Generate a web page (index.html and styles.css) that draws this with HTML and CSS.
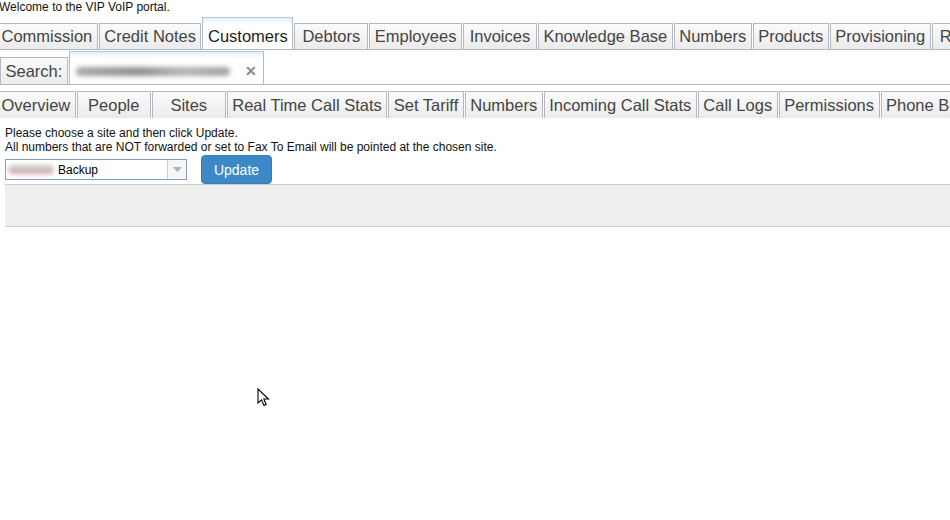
FILE: index.html
```html
<!DOCTYPE html>
<html>
<head>
<meta charset="utf-8">
<link rel="stylesheet" href="styles.css">
</head>
<body>
<div class="welcome">Welcome to the VIP VoIP portal.</div>
<div class="tabs main">
  <span class="tab">Commission</span>
  <span class="tab">Credit Notes</span>
  <span class="tab active">Customers</span>
  <span class="tab">Debtors</span>
  <span class="tab">Employees</span>
  <span class="tab">Invoices</span>
  <span class="tab">Knowledge Base</span>
  <span class="tab">Numbers</span>
  <span class="tab">Products</span>
  <span class="tab">Provisioning</span>
  <span class="tab">Reports</span>
</div>
<div class="tabs search">
  <span class="tab">Search:</span>
  <span class="tab active field"><span class="blur wide"></span><span class="close">✕</span></span>
</div>
<div class="tabs sub">
  <span class="tab">Overview</span>
  <span class="tab">People</span>
  <span class="tab">Sites</span>
  <span class="tab">Real Time Call Stats</span>
  <span class="tab">Set Tariff</span>
  <span class="tab">Numbers</span>
  <span class="tab">Incoming Call Stats</span>
  <span class="tab">Call Logs</span>
  <span class="tab">Permissions</span>
  <span class="tab">Phone Book</span>
</div>
<div class="content">
  <p class="msg">Please choose a site and then click Update.<br>All numbers that are NOT forwarded or set to Fax To Email will be pointed at the chosen site.</p>
  <div class="controls">
    <div class="select"><span class="blur small"></span><span class="val">Backup</span><span class="arrow"><svg width="9" height="5" viewBox="0 0 9 5"><path d="M0 0H9L4.5 5Z" fill="#a8b3c2"/></svg></span></div>
    <button class="btn">Update</button>
  </div>
  <div class="panel"></div>
</div>
<svg class="cursor" width="14" height="20" viewBox="0 0 14 20"><path d="M1 1V15L4.5 11.8L7 17.5L9.2 16.5L6.8 11H11.5Z" fill="#fff" stroke="#000" stroke-width="1.1" stroke-linejoin="miter"/></svg>
</body>
</html>
```
FILE: styles.css
```css
html, body {
  margin: 0;
  padding: 0;
  background: #fff;
  font-family: "Liberation Sans", Arial, sans-serif;
  overflow: hidden;
}
body {
  width: 950px;
  height: 520px;
  position: relative;
}
.welcome {
  font-size: 12px;
  line-height: 14px;
  color: #111;
  margin-left: -1px;
}
.tabs {
  display: flex;
  align-items: flex-end;
  gap: 1px;
  white-space: nowrap;
  overflow: hidden;
}
.tab {
  flex-shrink: 0;
  display: block;
  min-width: 63px;
  padding: 0 4.5px;
  text-align: center;
  font-size: 16.5px;
  line-height: 25px;
  color: #444;
  border: 1px solid #b3b8c3;
  background: linear-gradient(#fbfbfb, #ebebeb);
}
.main {
  margin-top: 3px;
  height: 32px;
  border-bottom: 1px solid #b3b8c3;
}
.main .tab {
  margin-bottom: -1px;
}
.main .tab:first-child,
.sub .tab:first-child {
  margin-left: -4px;
}
.tab.active {
  color: #1e1e1e;
  background: linear-gradient(#e2edf8, #fff 6px);
  border-color: #b3b8c3;
  border-top-color: #aecbe8;
  border-bottom-color: #fff;
  padding-top: 6px;
}
.search {
  margin-top: 1px;
  height: 33px;
  border-bottom: 1px solid #b3b8c3;
}
.search .tab {
  margin-bottom: -1px;
  line-height: 26px;
  min-width: 0;
}
.tab.field {
  width: 184px;
  text-align: left;
  position: relative;
}
.blur {
  display: inline-block;
  vertical-align: middle;
  background: #9a9a9a;
  filter: blur(2.5px);
  border-radius: 5px;
}
.blur.wide {
  width: 154px;
  height: 9px;
  margin-left: 2px;
  margin-top: -3px;
  background: linear-gradient(90deg, #a8a8a8, #8f8f8f 40%, #b4b4b4 70%, #a0a0a0);
}
.close {
  position: absolute;
  right: 6px;
  top: 11px;
  font-size: 14px;
  line-height: 16px;
  font-weight: bold;
  color: #8a8a8a;
}
.sub {
  margin-top: 6px;
}
.sub .tab {
  border-bottom: none;
  line-height: 26px;
}
.content {
  padding-left: 5px;
}
.msg {
  margin: 8px 0 0;
  font-size: 12px;
  line-height: 14px;
  color: #111;
}
.controls {
  display: flex;
  align-items: center;
  gap: 14px;
  margin-top: 1px;
  height: 29px;
}
.select {
  width: 180px;
  height: 19px;
  border: 1px solid #7f9fc4;
  display: flex;
  align-items: center;
  font-size: 12px;
  color: #000;
  background: #fff;
  position: relative;
}
.blur.small {
  width: 46px;
  height: 9px;
  margin-left: 2px;
  background: linear-gradient(#c8c8c8 60%, #e08a8a);
  filter: blur(2px);
}
.val {
  margin-left: 4px;
}
.arrow {
  position: absolute;
  right: 0;
  top: 0;
  bottom: 0;
  width: 18px;
  border-left: 1px solid #c8d0da;
  background: #f6f6f6;
  display: flex;
  align-items: center;
  justify-content: center;
}
.btn {
  width: 71px;
  height: 29px;
  border: 1px solid #357ebd;
  background: #3d89c8;
  color: #fff;
  border-radius: 4px;
  font-family: "Liberation Sans", Arial, sans-serif;
  font-size: 14px;
  padding: 0;
}
.panel {
  height: 41px;
  background: #eee;
  border-top: 1px solid #ccc;
  border-bottom: 1px solid #ccc;
  margin-right: -20px;
}
.cursor {
  position: absolute;
  left: 257px;
  top: 388px;
}
```
